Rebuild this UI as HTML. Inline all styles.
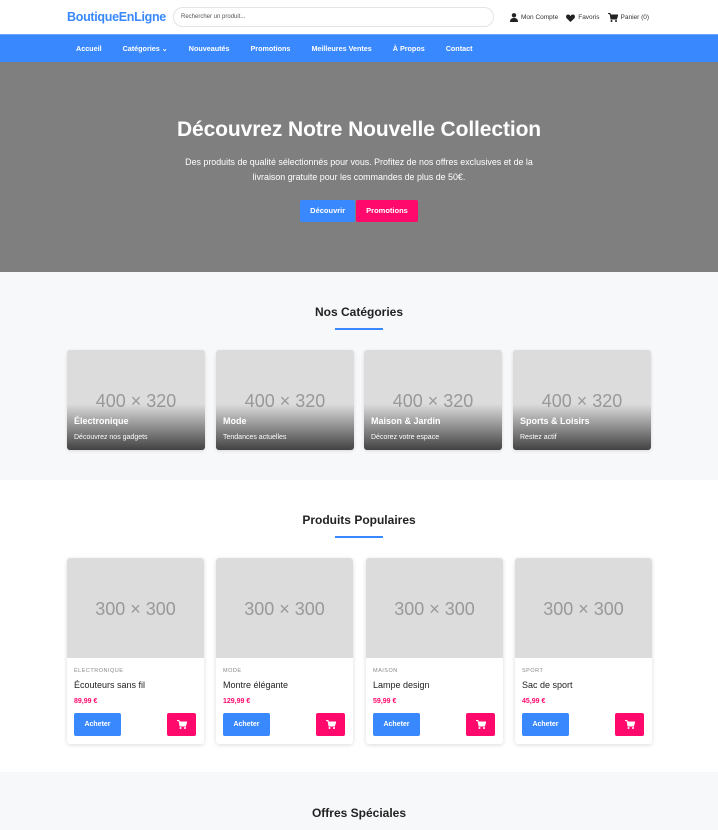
<!DOCTYPE html>
<html><head><meta charset="utf-8"><style>
*{margin:0;padding:0;box-sizing:border-box}
body{width:718px;height:830px;overflow:hidden;font-family:"Liberation Sans",sans-serif;background:#fff;color:#222}
.hdr{height:34px;position:relative}
.logo{position:absolute;left:67px;top:10px;font-size:12.5px;font-weight:bold;color:#3a88fe;letter-spacing:-0.3px}
.search{position:absolute;left:173px;top:7px;width:321px;height:20px;border:1px solid #e4e4e4;border-radius:10px;font-size:6px;color:#555;padding:6px 7px}
.acc{position:absolute;left:510px;top:13px;font-size:6.5px;color:#333;display:flex;gap:8px;align-items:center}
.acc span{display:flex;align-items:center;gap:3px}
.nav{height:28px;background:#3a88fe;border-top:1px solid #6aa6fe;display:flex;padding-left:76px;gap:0;align-items:center;color:#fff;font-size:7.2px;font-weight:bold}
.nav a{margin-right:21px}
.hero{height:210px;background:#7f7f7f;text-align:center;color:#fff;padding-top:56px}
.hero h1{font-size:21px;font-weight:bold;letter-spacing:-0.1px}
.hero p{font-size:8.9px;line-height:15px;margin-top:13px}
.btns{margin-top:15px;display:flex;justify-content:center;gap:1px}
.btn{height:22px;line-height:22px;font-size:7.5px;font-weight:bold;padding:0 10px;border-radius:2px;color:#fff}
.sec{position:relative}
.st{position:absolute;left:0;right:0;text-align:center;font-size:12px;font-weight:bold;color:#222}
.ul{position:absolute;width:48px;height:2px;background:#3a88fe;left:335px}
.cat{position:absolute;top:78px;width:138px;height:100px;background:#dcdcdc;border-radius:3px;overflow:hidden;box-shadow:0 1px 3px rgba(0,0,0,.12)}
.ph{position:absolute;left:0;right:0;text-align:center;color:#999;font-size:18px}
.cat .g{position:absolute;left:0;right:0;bottom:0;height:46px;background:linear-gradient(rgba(0,0,0,0),rgba(0,0,0,.7))}
.cat b{position:absolute;left:7px;top:66px;color:#fff;font-size:9px}
.cat i{position:absolute;left:7px;top:84px;color:#fff;font-size:7px;font-style:normal}
.pc{position:absolute;top:78px;width:137px;height:186px;background:#fff;border-radius:3px;overflow:hidden;box-shadow:0 1px 4px rgba(0,0,0,.14)}
.pc .im{height:100px;background:#dcdcdc;position:relative}
.pc .c{position:absolute;left:7px;top:110px;font-size:5.5px;color:#888;letter-spacing:.5px}
.pc .n{position:absolute;left:7px;top:122px;font-size:9px;color:#222}
.pc .p{position:absolute;left:7px;top:140px;font-size:7px;color:#ff0a6c;font-weight:bold}
.pc .a{position:absolute;left:7px;top:155px;width:47px;height:23px;background:#3a88fe;border-radius:2px;color:#fff;font-size:7px;font-weight:bold;text-align:center;line-height:23px}
.pc .k{position:absolute;right:8px;top:155px;width:29px;height:23px;background:#ff0a6c;border-radius:2px}
</style></head><body>
<div class="hdr">
<div class="logo">BoutiqueEnLigne</div>
<div class="search">Rechercher un produit...</div>
<div class="acc">
<span><svg width="8" height="9" viewBox="0 0 8 9"><circle cx="4" cy="2.3" r="2.2" fill="#222"/><path d="M0 9C0 6 1.5 5 4 5S8 6 8 9Z" fill="#222"/></svg>Mon Compte</span>
<span><svg width="9" height="8" viewBox="0 0 9 8"><path d="M4.5 8L0.6 4.2C-0.5 3 0 0.5 2.2 0.5 3.4 0.5 4 1.3 4.5 2 5 1.3 5.6 0.5 6.8 0.5 9 0.5 9.5 3 8.4 4.2Z" fill="#222"/></svg>Favoris</span>
<span><svg width="10" height="9" viewBox="0 0 10 9"><path d="M0 0.5H2L3 6H8.5L9.7 2H2.5" fill="#222" stroke="#222" stroke-width="1"/><circle cx="3.5" cy="8" r="1" fill="#222"/><circle cx="8" cy="8" r="1" fill="#222"/></svg>Panier (0)</span>
</div>
</div>
<div class="nav"><a>Accueil</a><a>Catégories &#8964;</a><a>Nouveautés</a><a>Promotions</a><a>Meilleures Ventes</a><a>À Propos</a><a>Contact</a></div>
<div class="hero">
<h1>Découvrez Notre Nouvelle Collection</h1>
<p>Des produits de qualité sélectionnés pour vous. Profitez de nos offres exclusives et de la<br>livraison gratuite pour les commandes de plus de 50€.</p>
<div class="btns"><div class="btn" style="background:#3a88fe">Découvrir</div><div class="btn" style="background:#ff0a6c">Promotions</div></div>
</div>
<div class="sec" style="height:208px;background:#f7f8fa">
<div class="st" style="top:33px">Nos Catégories</div><div class="ul" style="top:56px"></div>
<div class="cat" style="left:67px"><div class="ph" style="top:41px">400 × 320</div><div class="g"></div><b>Électronique</b><i>Découvrez nos gadgets</i></div>
<div class="cat" style="left:216px"><div class="ph" style="top:41px">400 × 320</div><div class="g"></div><b>Mode</b><i>Tendances actuelles</i></div>
<div class="cat" style="left:364px"><div class="ph" style="top:41px">400 × 320</div><div class="g"></div><b>Maison &amp; Jardin</b><i>Décorez votre espace</i></div>
<div class="cat" style="left:513px"><div class="ph" style="top:41px">400 × 320</div><div class="g"></div><b>Sports &amp; Loisirs</b><i>Restez actif</i></div>
</div>
<div class="sec" style="height:292px;background:#fff">
<div class="st" style="top:33px">Produits Populaires</div><div class="ul" style="top:56px"></div>
<div class="pc" style="left:67px"><div class="im"><div class="ph" style="top:41px">300 × 300</div></div><div class="c">ÉLECTRONIQUE</div><div class="n">Écouteurs sans fil</div><div class="p">89,99 €</div><div class="a">Acheter</div><div class="k"><svg style="margin:7px 10px" width="10" height="9" viewBox="0 0 10 9"><path d="M0 0.5H2L3 6H8.5L9.7 2H2.5" fill="#fff" stroke="#fff"/><circle cx="3.5" cy="8" r="1" fill="#fff"/><circle cx="8" cy="8" r="1" fill="#fff"/></svg></div></div>
<div class="pc" style="left:216px"><div class="im"><div class="ph" style="top:41px">300 × 300</div></div><div class="c">MODE</div><div class="n">Montre élégante</div><div class="p">129,99 €</div><div class="a">Acheter</div><div class="k"><svg style="margin:7px 10px" width="10" height="9" viewBox="0 0 10 9"><path d="M0 0.5H2L3 6H8.5L9.7 2H2.5" fill="#fff" stroke="#fff"/><circle cx="3.5" cy="8" r="1" fill="#fff"/><circle cx="8" cy="8" r="1" fill="#fff"/></svg></div></div>
<div class="pc" style="left:366px"><div class="im"><div class="ph" style="top:41px">300 × 300</div></div><div class="c">MAISON</div><div class="n">Lampe design</div><div class="p">59,99 €</div><div class="a">Acheter</div><div class="k"><svg style="margin:7px 10px" width="10" height="9" viewBox="0 0 10 9"><path d="M0 0.5H2L3 6H8.5L9.7 2H2.5" fill="#fff" stroke="#fff"/><circle cx="3.5" cy="8" r="1" fill="#fff"/><circle cx="8" cy="8" r="1" fill="#fff"/></svg></div></div>
<div class="pc" style="left:515px"><div class="im"><div class="ph" style="top:41px">300 × 300</div></div><div class="c">SPORT</div><div class="n">Sac de sport</div><div class="p">45,99 €</div><div class="a">Acheter</div><div class="k"><svg style="margin:7px 10px" width="10" height="9" viewBox="0 0 10 9"><path d="M0 0.5H2L3 6H8.5L9.7 2H2.5" fill="#fff" stroke="#fff"/><circle cx="3.5" cy="8" r="1" fill="#fff"/><circle cx="8" cy="8" r="1" fill="#fff"/></svg></div></div>
</div>
<div class="sec" style="height:58px;background:#f7f8fa">
<div class="st" style="top:34px">Offres Spéciales</div>
</div>
</body></html>
